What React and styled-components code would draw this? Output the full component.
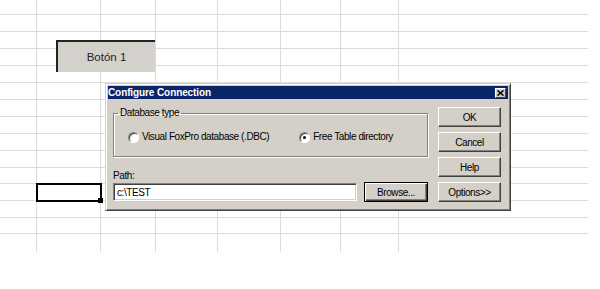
import React from 'react';
import styled, { createGlobalStyle, css } from 'styled-components';

const GlobalStyle = createGlobalStyle`
  body {
    margin: 0;
    background: #fff;
    font-family: "Liberation Sans", Arial, sans-serif;
  }
`;

// spreadsheet geometry (px, gridline included in each cell)
const COLS = [37, 64, 55, 62, 63, 60, 58, 189];
const ROWS = [15, 17, 17, 17, 17, 17, 17, 17, 17, 17, 16, 17, 17, 16, 18];
const SELECTED = { row: 11, col: 1 };

const Page = styled.div`
  position: relative;
  width: 600px;
  height: 289px;
  overflow: hidden;
`;

const Sheet = styled.div`
  display: grid;
  grid-template-columns: ${COLS.map((c) => `${c}px`).join(' ')};
  grid-template-rows: ${ROWS.map((r) => `${r}px`).join(' ')};
  width: max-content;
`;

const Cell = styled.div`
  position: relative;
  box-sizing: border-box;
  border-right: ${(p) => (p.$lastCol ? 'none' : '1px solid #dcdcdc')};
  border-bottom: ${(p) => (p.$lastRow ? 'none' : '1px solid #dcdcdc')};
  ${(p) =>
    p.$selected &&
    css`
      outline: 2px solid #000;
      outline-offset: -1px;
      z-index: 1;
    `}
`;

const FillHandle = styled.span`
  position: absolute;
  right: -3px;
  bottom: -3px;
  width: 5px;
  height: 5px;
  background: #000;
`;

const SheetButton = styled.div`
  position: absolute;
  left: 56px;
  top: 40px;
  width: 99px;
  height: 32px;
  box-sizing: border-box;
  background: #d4d1cc;
  border-top: 2px solid #222;
  border-left: 2px solid #222;
  display: flex;
  align-items: center;
  justify-content: center;
  font-size: 11.5px;
  color: #222;
`;

/* ---------- dialog ---------- */

const Dialog = styled.div`
  position: absolute;
  left: 105px;
  top: 83px;
  width: 406px;
  height: 128px;
  box-sizing: border-box;
  background: #d4d0c8;
  border: 1px solid;
  border-color: #d4d0c8 #404040 #404040 #d4d0c8;
  box-shadow: inset 1px 1px #fff, inset -1px -1px #808080;
  padding: 2px;
  display: flex;
  flex-direction: column;
  font-size: 10px;
  letter-spacing: -0.42px;
  color: #000;
`;

const TitleBar = styled.div`
  height: 13px;
  flex: none;
  background: #0a246a;
  display: flex;
  align-items: center;
  justify-content: space-between;
  padding: 0 2px 0 0;
`;

const Title = styled.span`
  color: #fff;
  font-weight: bold;
  font-size: 10px;
  letter-spacing: -0.1px;
  line-height: 13px;
`;

const CloseBox = styled.div`
  width: 11px;
  height: 10px;
  box-sizing: border-box;
  background: #d4d0c8;
  border: 1px solid;
  border-color: #fff #404040 #404040 #fff;
  display: flex;
  align-items: center;
  justify-content: center;
`;

const Body = styled.div`
  flex: 1;
  display: flex;
  gap: 10px;
  padding: 0 7px 0 5px;
`;

const LeftCol = styled.div`
  width: 315px;
  display: flex;
  flex-direction: column;
`;

const GroupBox = styled.fieldset`
  margin: 8px 0 0;
  padding: 0;
  border: 1px solid #808080;
  box-shadow: inset 1px 1px #fff, 1px 1px #fff;
  min-width: 0;
`;

const Legend = styled.legend`
  margin-left: 4px;
  padding: 0 2px;
  line-height: 12px;
`;

const RadioRow = styled.div`
  display: flex;
  align-items: center;
  gap: 30px;
  padding: 12px 0 13px 14px;
`;

const RadioOption = styled.label`
  display: flex;
  align-items: center;
  gap: 3px;
  line-height: 12px;
`;

const RadioDot = styled.span`
  width: 11px;
  height: 11px;
  box-sizing: border-box;
  border-radius: 50%;
  background: #fff;
  border: 1px solid;
  border-color: #808080 #fff #fff #808080;
  box-shadow: inset 1px 1px #404040;
  display: flex;
  align-items: center;
  justify-content: center;
  &::after {
    content: '';
    width: 3px;
    height: 3px;
    border-radius: 50%;
    background: ${(p) => (p.$checked ? '#000' : 'transparent')};
  }
`;

const PathLabel = styled.div`
  margin-top: 13px;
  line-height: 12px;
`;

const InputRow = styled.div`
  display: flex;
  align-items: center;
  gap: 7px;
  height: 20px;
`;

const PathInput = styled.input`
  flex: 1;
  min-width: 0;
  height: 18px;
  box-sizing: border-box;
  margin: 0;
  padding: 0 0 0 3px;
  border: 1px solid;
  border-color: #808080 #fff #fff #808080;
  box-shadow: inset 1px 1px #404040, inset -1px -1px #d4d0c8;
  background: #fff;
  font: inherit;
  letter-spacing: inherit;
  color: #000;
  outline: none;
`;

const Button = styled.button`
  width: ${(p) => p.$width || 63}px;
  height: 20px;
  box-sizing: border-box;
  margin: 0;
  padding: 0;
  background: #d4d0c8;
  font: inherit;
  letter-spacing: inherit;
  color: #000;
  ${(p) =>
    p.$default
      ? css`
          border: 1px solid #000;
          box-shadow: inset 1px 1px #fff, inset -1px -1px #404040,
            inset -2px -2px #808080;
        `
      : css`
          border: 1px solid;
          border-color: #fff #404040 #404040 #fff;
          box-shadow: inset -1px -1px #808080;
        `}
`;

const RightCol = styled.div`
  width: 63px;
  padding-top: 8px;
  display: flex;
  flex-direction: column;
  gap: 5px;
`;

const CloseIcon = () => (
  <svg width="7" height="6" viewBox="0 0 7 6">
    <path d="M0.5 0.5 L6.5 5.5 M6.5 0.5 L0.5 5.5" stroke="#000" strokeWidth="1.6" />
  </svg>
);

const ConfigureConnection = () => (
  <Dialog>
    <TitleBar>
      <Title>Configure Connection</Title>
      <CloseBox>
        <CloseIcon />
      </CloseBox>
    </TitleBar>
    <Body>
      <LeftCol>
        <GroupBox>
          <Legend>Database type</Legend>
          <RadioRow>
            <RadioOption>
              <RadioDot />
              Visual FoxPro database (.DBC)
            </RadioOption>
            <RadioOption>
              <RadioDot $checked />
              Free Table directory
            </RadioOption>
          </RadioRow>
        </GroupBox>
        <PathLabel>Path:</PathLabel>
        <InputRow>
          <PathInput defaultValue="c:\TEST" readOnly />
          <Button $width={64} $default>
            Browse...
          </Button>
        </InputRow>
      </LeftCol>
      <RightCol>
        <Button>OK</Button>
        <Button>Cancel</Button>
        <Button>Help</Button>
        <Button>Options&gt;&gt;</Button>
      </RightCol>
    </Body>
  </Dialog>
);

export default function App() {
  return (
    <Page>
      <GlobalStyle />
      <Sheet>
        {ROWS.map((_, r) =>
          COLS.map((__, c) => {
            const selected = r === SELECTED.row && c === SELECTED.col;
            return (
              <Cell
                key={`${r}-${c}`}
                $lastCol={c === COLS.length - 1}
                $lastRow={r === ROWS.length - 1}
                $selected={selected}
              >
                {selected && <FillHandle />}
              </Cell>
            );
          })
        )}
      </Sheet>
      <SheetButton>Botón 1</SheetButton>
      <ConfigureConnection />
    </Page>
  );
}
